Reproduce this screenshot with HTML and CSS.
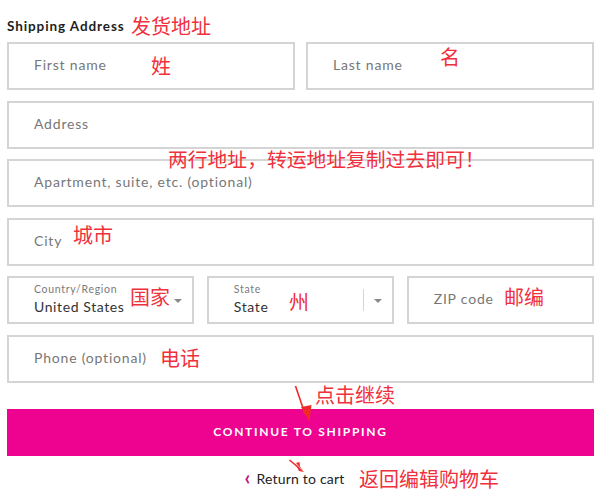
FILE: index.html
```html
<!DOCTYPE html>
<html>
<head>
<meta charset="utf-8">
<link rel="stylesheet" href="styles.css">
</head>
<body>
<div class="page">
  <h2 class="heading">Shipping Address</h2>
  <div class="form">
    <div class="row two">
      <div class="field"><span class="ph">First name</span></div>
      <div class="field"><span class="ph">Last name</span></div>
    </div>
    <div class="field"><span class="ph">Address</span></div>
    <div class="field"><span class="ph">Apartment, suite, etc. (optional)</span></div>
    <div class="field"><span class="ph">City</span></div>
    <div class="row three">
      <div class="field select">
        <div class="sel-text">
          <span class="lbl">Country/Region</span>
          <span class="val">United States</span>
        </div>
        <span class="caret"></span>
      </div>
      <div class="field select">
        <div class="sel-text">
          <span class="lbl">State</span>
          <span class="val">State</span>
        </div>
        <span class="sep"></span>
        <span class="caret"></span>
      </div>
      <div class="field"><span class="ph">ZIP code</span></div>
    </div>
    <div class="field"><span class="ph">Phone (optional)</span></div>
  </div>
  <button class="btn">CONTINUE TO SHIPPING</button>
  <div class="back"><span class="chev">‹</span>Return to cart</div>

  <div class="notes">
    <span class="note n1">发货地址</span>
    <span class="note n2">姓</span>
    <span class="note n3">名</span>
    <span class="note n4">两行地址，转运地址复制过去即可！</span>
    <span class="note n5">城市</span>
    <span class="note n6">国家</span>
    <span class="note n7">州</span>
    <span class="note n8">邮编</span>
    <span class="note n9">电话</span>
    <span class="note n10">点击继续</span>
    <span class="note n11">返回编辑购物车</span>
    <svg class="arrows" width="600" height="500" viewBox="0 0 600 500">
      <path d="M295.5 386 L305 414" stroke="#ee2a2a" stroke-width="1.6" fill="none"/>
      <path d="M301 407 L309.5 422 L311.5 405 Z" fill="#ee2a2a"/>
      <path d="M289.5 460 L299 468" stroke="#ee2a2a" stroke-width="1.6" fill="none"/>
      <path d="M295.5 464 L304 472 L299 471 Z" fill="#ee2a2a"/>
      <path d="M296 463 L304 472 L300 466.5 L299.5 462 Z" fill="#ee2a2a"/>
    </svg>
  </div>
</div>
</body>
</html>
```
FILE: styles.css
```css
* { box-sizing: border-box; }
html, body { margin: 0; padding: 0; background: #fff; }
body { font-family: Lato, "Open Sans", "Noto Sans CJK SC", sans-serif; }
.page {
  position: relative;
  width: 600px;
  height: 500px;
  padding: 0 6px 0 7px;
}
.heading {
  margin: 0;
  padding-top: 17px;
  height: 42px;
  font-size: 13.5px;
  font-weight: 700;
  letter-spacing: 0.9px;
  color: #1e1e1e;
  line-height: 18px;
}
.form {
  display: flex;
  flex-direction: column;
  gap: 10.5px;
}
.row { display: grid; gap: 11px; }
.row.two { grid-template-columns: 1fr 1fr; }
.row.three { grid-template-columns: 1fr 1fr 1fr; gap: 12.5px; }
.field {
  height: 48px;
  border: 2px solid #d4d4d4;
  display: flex;
  align-items: center;
  padding-left: 25px;
  padding-bottom: 3px;
  position: relative;
}
.ph {
  font-size: 14px;
  letter-spacing: 0.8px;
  color: #777;
}
.select { padding-right: 10px; padding-bottom: 1px; }
.sel-text {
  display: flex;
  flex-direction: column;
  flex: 1;
}
.lbl {
  font-size: 10.5px;
  letter-spacing: 0.7px;
  color: #7a7a7a;
  line-height: 13px;
}
.val {
  font-size: 14px;
  letter-spacing: 0.6px;
  color: #333;
  line-height: 20px;
  margin-top: 1px;
}
.caret {
  width: 0; height: 0;
  border-left: 4px solid transparent;
  border-right: 4px solid transparent;
  border-top: 4px solid #8a8a8a;
  margin-top: 2px;
}
.sep {
  width: 1px;
  height: 22px;
  background: #d4d4d4;
  margin-right: 10px;
}
.btn {
  display: block;
  width: 100%;
  height: 47px;
  margin-top: 26px;
  border: none;
  background: #ee0290;
  color: #fff;
  font-family: Lato, sans-serif;
  font-size: 12px;
  font-weight: 700;
  letter-spacing: 1.7px;
  padding: 0 0 2px;
}
.back {
  margin-top: 8px;
  text-align: center;
  font-size: 14px;
  color: #222;
  letter-spacing: 0.2px;
  padding-right: 12px;
}
.chev {
  color: #c0157d;
  font-size: 20px;
  font-weight: 700;
  margin-right: 6px;
  position: relative;
  top: 1px;
}
.notes { position: absolute; left: 0; top: 0; width: 600px; height: 500px; pointer-events: none; }
.note {
  position: absolute;
  font-family: "Noto Sans CJK SC", sans-serif;
  color: #f0303c;
  font-size: 20px;
  line-height: 22px;
  font-weight: 400;
  white-space: nowrap;
}
.n1 { left: 131px; top: 15px; }
.n2 { left: 151px; top: 55px; }
.n3 { left: 440px; top: 46px; }
.n4 { left: 168px; top: 148px; font-size: 19.8px; }
.n5 { left: 73px; top: 224px; }
.n6 { left: 130px; top: 286px; }
.n7 { left: 289px; top: 291px; }
.n8 { left: 504px; top: 286px; }
.n9 { left: 160px; top: 347px; }
.n10 { left: 315px; top: 384px; }
.n11 { left: 359px; top: 468px; }
.arrows { position: absolute; left: 0; top: 0; }
```
